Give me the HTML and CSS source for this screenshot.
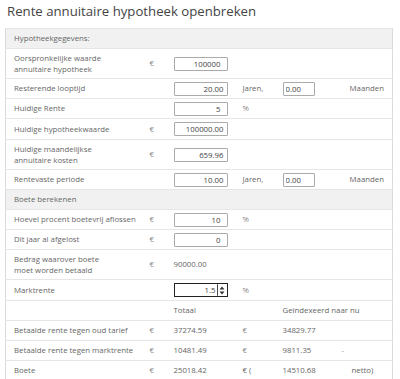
FILE: index.html
```html
<!DOCTYPE html>
<html lang="nl">
<head>
    <meta charset="UTF-8">
    <title>Rente annuitaire hypotheek openbreken</title>
    <link rel="stylesheet" href="styles.css">
</head>
<body>

<h3 class="post-title">Rente annuitaire hypotheek openbreken</h3>

<table class="calc">
    <colgroup>
        <col class="c-label">
        <col class="c-eur">
        <col class="c-val">
        <col class="c-unit">
        <col class="c-val2">
        <col class="c-end">
    </colgroup>
    <tr class="section"><td colspan="6">Hypotheekgegevens:</td></tr>
    <tr class="tall">
        <td>Oorspronkelijke waarde<br>annuitaire hypotheek</td>
        <td class="eur">&euro;</td>
        <td><input type="text" class="num wide" value="100000"></td>
        <td></td><td></td><td></td>
    </tr>
    <tr>
        <td>Resterende looptijd</td>
        <td></td>
        <td><input type="text" class="num" value="20.00"></td>
        <td>Jaren,</td>
        <td><input type="text" class="small" value="0.00"></td>
        <td class="right">Maanden</td>
    </tr>
    <tr>
        <td>Huidige Rente</td>
        <td></td>
        <td><input type="text" class="num wide" value="5"></td>
        <td class="eur">%</td>
        <td></td><td></td>
    </tr>
    <tr class="mid">
        <td>Huidige hypotheekwaarde</td>
        <td class="eur">&euro;</td>
        <td><input type="text" class="num" value="100000.00"></td>
        <td></td><td></td><td></td>
    </tr>
    <tr class="tall">
        <td>Huidige maandelijkse<br>annuitaire kosten</td>
        <td class="eur">&euro;</td>
        <td><input type="text" class="num" value="659.96"></td>
        <td></td><td></td><td></td>
    </tr>
    <tr>
        <td>Rentevaste periode</td>
        <td></td>
        <td><input type="text" class="num" value="10.00"></td>
        <td>Jaren,</td>
        <td><input type="text" class="small" value="0.00"></td>
        <td class="right">Maanden</td>
    </tr>
    <tr class="section"><td colspan="6">Boete berekenen</td></tr>
    <tr>
        <td>Hoevel procent boetevrij aflossen</td>
        <td class="eur">&euro;</td>
        <td><input type="text" class="num wide" value="10"></td>
        <td class="eur">%</td>
        <td></td><td></td>
    </tr>
    <tr>
        <td>Dit jaar al afgelost</td>
        <td class="eur">&euro;</td>
        <td><input type="text" class="num wide" value="0"></td>
        <td></td><td></td><td></td>
    </tr>
    <tr class="tall">
        <td>Bedrag waarover boete<br>moet worden betaald</td>
        <td class="eur">&euro;</td>
        <td class="out">90000.00</td>
        <td></td><td></td><td></td>
    </tr>
    <tr class="mid">
        <td>Marktrente</td>
        <td></td>
        <td>
            <span class="spin">
                <input type="text" class="num" value="1.5">
                <svg width="6" height="9" viewBox="0 0 6 9"><path d="M3 0.5 L5.5 3.5 L0.5 3.5 Z M3 8.5 L5.5 5.5 L0.5 5.5 Z" fill="#333"/></svg>
            </span>
        </td>
        <td class="eur">%</td>
        <td></td><td></td>
    </tr>
    <tr>
        <td></td>
        <td></td>
        <td class="out">Totaal</td>
        <td></td>
        <td colspan="2">Geindexeerd naar nu</td>
    </tr>
    <tr>
        <td>Betaalde rente tegen oud tarief</td>
        <td class="eur">&euro;</td>
        <td class="out">37274.59</td>
        <td class="eur">&euro;</td>
        <td>34829.77</td>
        <td></td>
    </tr>
    <tr>
        <td>Betaalde rente tegen marktrente</td>
        <td class="eur">&euro;</td>
        <td class="out">10481.49</td>
        <td class="eur">&euro;</td>
        <td>9811.35</td>
        <td class="dash">-</td>
    </tr>
    <tr>
        <td>Boete</td>
        <td class="eur">&euro;</td>
        <td class="out">25018.42</td>
        <td>&euro; (</td>
        <td>14510.68</td>
        <td class="netto">netto)</td>
    </tr>
</table>

</body>
</html>
```

FILE: styles.css
```css
/* Basic styling */
body {
    margin: 0;
    padding: 0 7px 0 5px;
    background-color: #fff;
    font-family: "Open Sans", Arial, sans-serif;
}
.post-title {
    margin: 2px 0 8px 2px;
    font-size: 13.2px;
    font-weight: normal;
    color: #444;
    line-height: 18px;
}
.calc {
    width: 388px;
    table-layout: fixed;
    border-collapse: collapse;
    border: 1px solid #dadada;
    font-size: 7.8px;
    color: #666;
}
.c-label { width: 136px; }
.c-eur { width: 26px; }
.c-val { width: 67px; }
.c-unit { width: 40px; }
.c-val2 { width: 60px; }
.calc td {
    height: 19px;
    padding: 0 0 0 8px;
    border-top: 1px solid #e6e6e6;
    white-space: nowrap;
    line-height: 11px;
}
.calc tr.mid td {
    height: 20px;
}
.calc tr.tall td {
    height: 29px;
}
.calc tr.section td {
    background-color: #f1f1f1;
}
.calc td.eur {
    color: #888;
}
.calc td.right {
    text-align: right;
    padding-right: 8px;
}
.calc td.out {
    padding-left: 6px;
}
.calc td.dash {
    padding-left: 7px;
    color: #999;
}
.calc td.netto {
    padding-left: 17px;
}
.calc input {
    box-sizing: border-box;
    height: 14px;
    padding: 0 3px 0 2px;
    border: 1px solid #aaa;
    border-radius: 1px;
    font-family: "Open Sans", Arial, sans-serif;
    font-size: 7.8px;
    color: #444;
    background: #fff;
    vertical-align: middle;
}
.calc input.num {
    width: 54px;
    text-align: right;
    margin-left: -2px;
}
.calc input.wide {
    padding-right: 6px;
}
.calc input.small {
    width: 32px;
}
.spin {
    display: inline-flex;
    align-items: center;
    box-sizing: border-box;
    width: 54px;
    height: 14px;
    margin-left: -2px;
    border: 1px solid #222;
    vertical-align: middle;
}
.spin input.num {
    width: 43px;
    height: 12px;
    margin: 0;
    padding: 0 1px 0 0;
    border: none;
    border-right: 1px solid #444;
}
.spin svg {
    margin-left: 1px;
}
```
